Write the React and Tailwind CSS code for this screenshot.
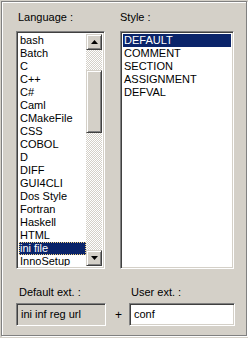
const languages = [
  'bash', 'Batch', 'C', 'C++', 'C#', 'Caml', 'CMakeFile', 'CSS', 'COBOL', 'D',
  'DIFF', 'GUI4CLI', 'Dos Style', 'Fortran', 'Haskell', 'HTML', 'ini file', 'InnoSetup',
];
const styles = ['DEFAULT', 'COMMENT', 'SECTION', 'ASSIGNMENT', 'DEFVAL'];

const sunken =
  'border border-t-[#808080] border-l-[#808080] border-r-white border-b-white shadow-[inset_1px_1px_0_#404040,inset_-1px_-1px_0_#d4d0c8]';
const raised =
  'bg-[#d4d0c8] border border-t-[#d4d0c8] border-l-[#d4d0c8] border-r-[#404040] border-b-[#404040] shadow-[inset_1px_1px_0_#fff,inset_-1px_-1px_0_#808080]';
const checker =
  'bg-[image:repeating-conic-gradient(#d4d0c8_0%_25%,#ffffff_0%_50%)] bg-[length:2px_2px]';

function Arrow({ down }) {
  return (
    <svg width="7" height="4" viewBox="0 0 7 4">
      <polygon points={down ? '0,0 7,0 3.5,4' : '3.5,0 7,4 0,4'} fill="#000" />
    </svg>
  );
}

function ScrollBar() {
  return (
    <div className={`flex w-[16px] flex-col ${checker}`}>
      <div className={`flex h-[16px] items-center justify-center ${raised}`}>
        <Arrow />
      </div>
      <div className="h-[20px]" />
      <div className={`h-[63px] ${raised}`} />
      <div className="flex-1" />
      <div className={`flex h-[16px] items-center justify-center ${raised}`}>
        <Arrow down />
      </div>
    </div>
  );
}

function ListItem({ label, selected, focused }) {
  return (
    <div
      className={`h-[13px] truncate pl-[1px] leading-[13px] ${
        selected ? 'bg-[#0a246a] text-white' : 'text-black'
      } ${focused ? 'outline outline-1 -outline-offset-1 outline-dotted outline-[#f0d080]' : ''}`}
    >
      {label}
    </div>
  );
}

export default function App() {
  return (
    <div
      className="h-[338px] w-[248px] bg-[#d4d0c8] p-px pb-[2px] text-[11px] text-black"
      style={{ fontFamily: '"Liberation Sans", Arial, sans-serif' }}
    >
      <div className="flex h-full flex-col border border-[#808080] pl-[14px] pt-[9px] shadow-[inset_1px_1px_0_#fff,1px_1px_0_#fff]">
        <div className="flex gap-[15px]">
          <div className="flex w-[89px] flex-col gap-[7px]">
            <div className="h-[13px] pl-[2px] leading-[13px]">Language :</div>
            <div className={`flex h-[238px] bg-white p-[2px] ${sunken}`}>
              <div className="min-w-0 flex-1 overflow-hidden">
                {languages.map((l) => (
                  <ListItem key={l} label={l} selected={l === 'ini file'} focused={l === 'ini file'} />
                ))}
              </div>
              <ScrollBar />
            </div>
          </div>

          <div className="flex w-[114px] flex-col gap-[7px]">
            <div className="h-[13px] leading-[13px]">Style :</div>
            <div className={`h-[238px] bg-white p-[2px] ${sunken}`}>
              {styles.map((s) => (
                <ListItem key={s} label={s} selected={s === 'DEFAULT'} />
              ))}
            </div>
          </div>
        </div>

        <div className="mt-[17px] flex items-end">
          <div className="flex w-[90px] flex-col gap-[4px]">
            <div className="h-[13px] pl-[3px] leading-[13px]">Default ext. :</div>
            <div className={`flex h-[23px] items-center pl-[4px] ${sunken}`}>ini inf reg url</div>
          </div>
          <div className="flex h-[23px] w-[23px] items-center justify-center pl-[2px] text-[12px]">+</div>
          <div className="flex w-[106px] flex-col gap-[4px]">
            <div className="h-[13px] pl-[2px] leading-[13px]">User ext. :</div>
            <div className={`flex h-[23px] items-center bg-white pl-[4px] ${sunken}`}>conf</div>
          </div>
        </div>
      </div>
    </div>
  );
}
